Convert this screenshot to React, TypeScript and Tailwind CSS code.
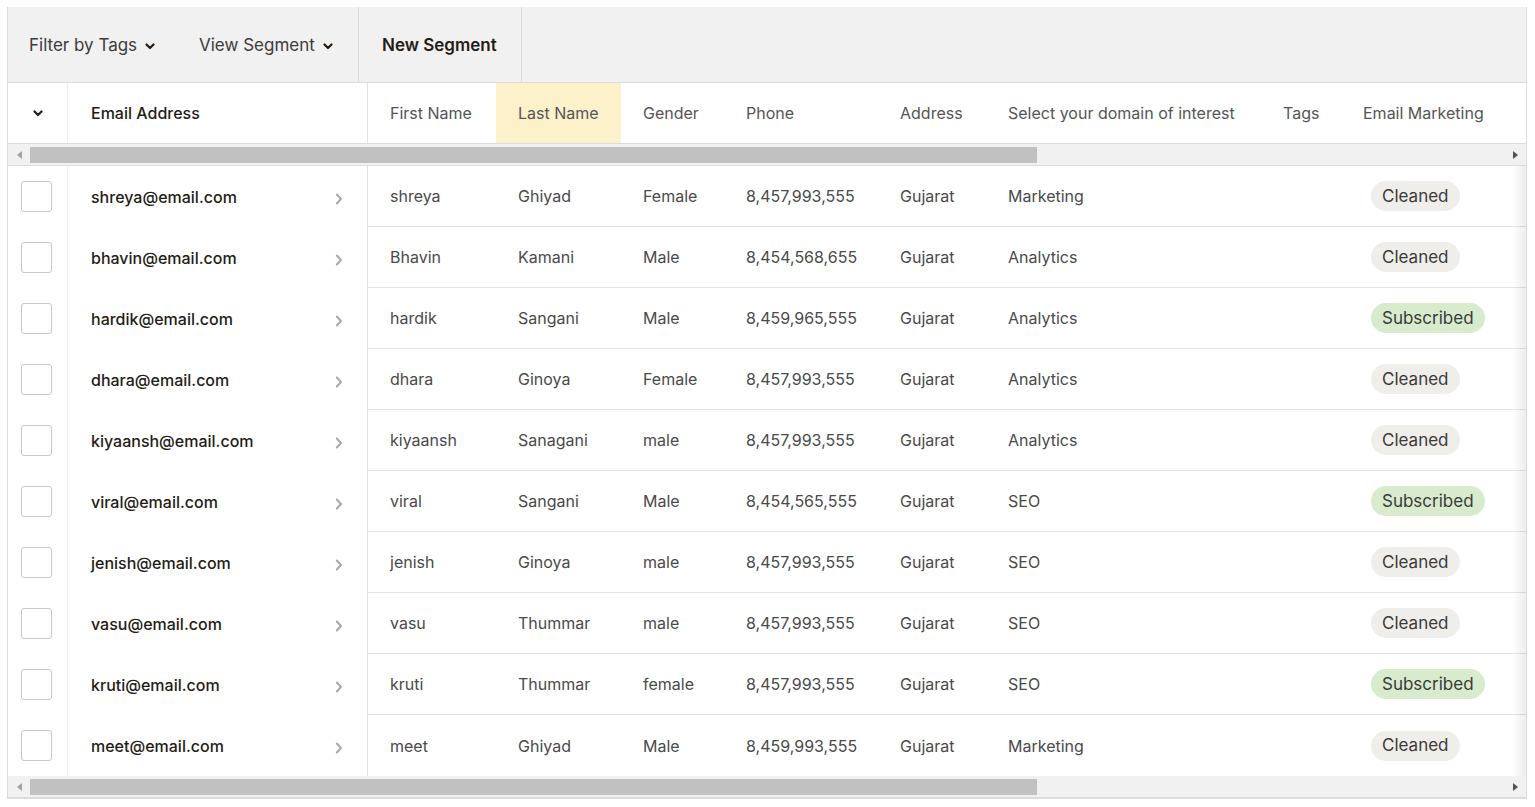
import React from "react";

type Row = {
  email: string;
  first: string;
  last: string;
  gender: string;
  phone: string;
  domain: string;
  status: "Cleaned" | "Subscribed";
};

const ROWS: Row[] = [
  { email: "shreya@email.com", first: "shreya", last: "Ghiyad", gender: "Female", phone: "8,457,993,555", domain: "Marketing", status: "Cleaned" },
  { email: "bhavin@email.com", first: "Bhavin", last: "Kamani", gender: "Male", phone: "8,454,568,655", domain: "Analytics", status: "Cleaned" },
  { email: "hardik@email.com", first: "hardik", last: "Sangani", gender: "Male", phone: "8,459,965,555", domain: "Analytics", status: "Subscribed" },
  { email: "dhara@email.com", first: "dhara", last: "Ginoya", gender: "Female", phone: "8,457,993,555", domain: "Analytics", status: "Cleaned" },
  { email: "kiyaansh@email.com", first: "kiyaansh", last: "Sanagani", gender: "male", phone: "8,457,993,555", domain: "Analytics", status: "Cleaned" },
  { email: "viral@email.com", first: "viral", last: "Sangani", gender: "Male", phone: "8,454,565,555", domain: "SEO", status: "Subscribed" },
  { email: "jenish@email.com", first: "jenish", last: "Ginoya", gender: "male", phone: "8,457,993,555", domain: "SEO", status: "Cleaned" },
  { email: "vasu@email.com", first: "vasu", last: "Thummar", gender: "male", phone: "8,457,993,555", domain: "SEO", status: "Cleaned" },
  { email: "kruti@email.com", first: "kruti", last: "Thummar", gender: "female", phone: "8,457,993,555", domain: "SEO", status: "Subscribed" },
  { email: "meet@email.com", first: "meet", last: "Ghiyad", gender: "Male", phone: "8,459,993,555", domain: "Marketing", status: "Cleaned" },
];

function ChevronDown({ className = "" }: { className?: string }) {
  return (
    <svg viewBox="0 0 10 7" className={className} fill="none">
      <path d="M1.5 1.5 5 5l3.5-3.5" stroke="currentColor" strokeWidth="2.2" strokeLinecap="round" strokeLinejoin="round" />
    </svg>
  );
}

function ChevronRight() {
  return (
    <svg viewBox="0 0 8 12" className="w-[8px] h-[12px] text-[#a9a9a9]" fill="none">
      <path d="M1.8 1.5 6 6l-4.2 4.5" stroke="currentColor" strokeWidth="2" strokeLinecap="round" strokeLinejoin="round" />
    </svg>
  );
}

function Scrollbar() {
  return (
    <div className="h-[22px] bg-[#f1f1f1] border-b border-[#dcdcdc] flex items-center">
      <div className="w-[22px] flex justify-center">
        <svg viewBox="0 0 5 8" className="w-[5px] h-[8px]">
          <path d="M5 0v8L0 4z" fill="#a3a3a3" />
        </svg>
      </div>
      <div className="h-[16px] w-[1007px] bg-[#c1c1c1]" />
      <div className="flex-1" />
      <div className="w-[22px] flex justify-center">
        <svg viewBox="0 0 5 8" className="w-[5px] h-[8px]">
          <path d="M0 0v8l5-4z" fill="#505050" />
        </svg>
      </div>
    </div>
  );
}

const COLS = [
  { label: "First Name", w: "w-[128px]" },
  { label: "Last Name", w: "w-[125px]", hl: true },
  { label: "Gender", w: "w-[103px]" },
  { label: "Phone", w: "w-[154px]" },
  { label: "Address", w: "w-[108px]" },
  { label: "Select your domain of interest", w: "w-[275px]" },
  { label: "Tags", w: "w-[80px]" },
  { label: "Email Marketing", w: "w-[190px]" },
];

export default function App() {
  return (
    <div
      className="bg-white min-h-screen pt-[7px] pl-[7px] text-[#4a4a4a]"
      style={{ fontFamily: "Inter, 'Liberation Sans', sans-serif" }}
    >
      <div className="w-[1520px] border-l border-r border-b border-[#dcdcdc]">
        {/* toolbar */}
        <div className="h-[76px] bg-[#f1f1f1] border-b border-[#dcdcdc] flex items-stretch text-[17px] text-[#3c3c3c]">
          <div className="flex items-center gap-[8px] pl-[21px] pt-[3px] w-[171px]">
            <span>Filter by Tags</span>
            <ChevronDown className="w-[10px] h-[7px] text-[#241c15]" />
          </div>
          <div className="flex items-center gap-[8px] pl-[20px] pt-[3px] w-[180px] border-r border-[#dcdcdc]">
            <span>View Segment</span>
            <ChevronDown className="w-[10px] h-[7px] text-[#241c15]" />
          </div>
          <div className="flex items-center pl-[23px] pr-[24px] pt-[3px] border-r border-[#dcdcdc] font-semibold text-[#241c15]">
            New Segment
          </div>
        </div>

        {/* header */}
        <div className="h-[61px] border-b border-[#dcdcdc] flex text-[16px]">
          <div className="w-[60px] border-r border-[#efefef] flex items-center justify-center">
            <ChevronDown className="w-[10px] h-[7px] text-[#241c15]" />
          </div>
          <div className="w-[300px] border-r border-[#e3e3e3] flex items-center pl-[23px] font-medium text-[#241c15]">
            Email Address
          </div>
          <div className="flex-1 overflow-hidden flex">
            {COLS.map((c) => (
              <div
                key={c.label}
                className={`${c.w} shrink-0 flex items-center pl-[22px] text-[#555] whitespace-nowrap ${c.hl ? "bg-[#fdf1cc]" : ""}`}
              >
                {c.label}
              </div>
            ))}
          </div>
        </div>

        <Scrollbar />

        {/* body */}
        <div className="flex text-[16px] relative">
          <div className="w-[60px] border-r border-[#efefef] shrink-0">
            {ROWS.map((r) => (
              <div key={r.email} className="h-[61px] flex items-center pl-[13px]">
                <div className="w-[31px] h-[31px] rounded-[3px] border border-[#c8c8c8] bg-white" />
              </div>
            ))}
          </div>
          <div className="w-[300px] border-r border-[#e3e3e3] shrink-0">
            {ROWS.map((r) => (
              <div key={r.email} className="h-[61px] flex items-center pl-[23px] pr-[24px]">
                <span className="flex-1 font-medium text-[#241c15]">{r.email}</span>
                <span className="mt-[5px]">
                  <ChevronRight />
                </span>
              </div>
            ))}
          </div>
          <div className="flex-1 overflow-hidden">
            {ROWS.map((r, i) => (
              <div
                key={r.email}
                className={`h-[61px] flex items-center whitespace-nowrap ${i < ROWS.length - 1 ? "border-b border-[#e3e3e3]" : ""}`}
              >
                <div className="w-[128px] shrink-0 pl-[22px]">{r.first}</div>
                <div className="w-[125px] shrink-0 pl-[22px]">{r.last}</div>
                <div className="w-[103px] shrink-0 pl-[22px]">{r.gender}</div>
                <div className="w-[154px] shrink-0 pl-[22px]">{r.phone}</div>
                <div className="w-[108px] shrink-0 pl-[22px]">Gujarat</div>
                <div className="w-[275px] shrink-0 pl-[22px]">{r.domain}</div>
                <div className="w-[80px] shrink-0" />
                <div className="w-[190px] shrink-0 pl-[30px]">
                  <span
                    className={`inline-flex items-center h-[30px] pt-[1px] px-[11px] rounded-full text-[17px] text-[#3a3a3a] ${
                      r.status === "Subscribed" ? "bg-[#d8ebcd]" : "bg-[#efeeea]"
                    }`}
                  >
                    {r.status}
                  </span>
                </div>
              </div>
            ))}
          </div>
          <div className="absolute right-0 top-0 bottom-0 w-[14px] bg-gradient-to-r from-transparent to-black/[0.07] pointer-events-none" />
        </div>

        <Scrollbar />
      </div>
    </div>
  );
}
